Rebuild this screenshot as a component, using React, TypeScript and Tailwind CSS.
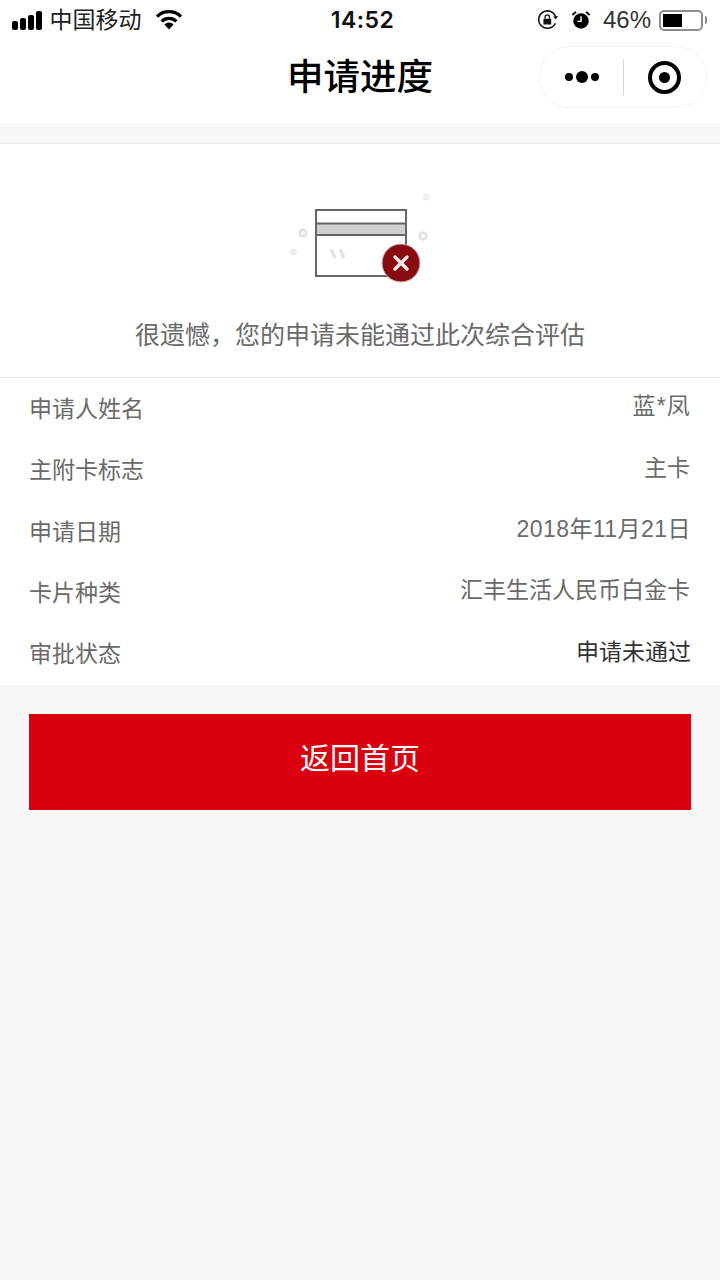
const font = { fontFamily: '"Liberation Sans", "Noto Sans CJK SC", sans-serif' };

const rows = [
  { label: "申请人姓名", value: "蓝*凤", spacing: "tracking-[1.2px] mr-[-1px]", tone: "text-[#6a6a6a]" },
  { label: "主附卡标志", value: "主卡", spacing: "", tone: "text-[#6a6a6a]" },
  { label: "申请日期", value: "2018年11月21日", spacing: "tracking-[0.45px] mr-[-1px]", tone: "text-[#6a6a6a]" },
  { label: "卡片种类", value: "汇丰生活人民币白金卡", spacing: "", tone: "text-[#6a6a6a]" },
  { label: "审批状态", value: "申请未通过", spacing: "mr-[-1px]", tone: "text-[#333]" },
];

function StatusBar() {
  return (
    <div className="flex h-[40px] items-center justify-between pl-[12px] pr-[13px] text-black">
      <div className="flex w-[200px] items-center">
        <div className="flex items-end gap-[2.5px]">
          <span className="h-[9px] w-[5.5px] rounded-[2px] bg-black" />
          <span className="h-[12px] w-[5.5px] rounded-[2px] bg-black" />
          <span className="h-[15px] w-[5.5px] rounded-[2px] bg-black" />
          <span className="h-[19px] w-[5.5px] rounded-[2px] bg-black" />
        </div>
        <span className="ml-[8px] text-[23px] leading-[30px] text-[#222]">中国移动</span>
        <svg className="ml-[13px]" width="28" height="20" viewBox="0 0 28 20">
          <path d="M14 19.5l-4.6-5a6.4 6.4 0 0 1 9.2 0z" fill="#000" />
          <path d="M6.6 11.4a10.6 10.6 0 0 1 14.8 0" fill="none" stroke="#000" strokeWidth="3.2" />
          <path d="M2 6.6a17.2 17.2 0 0 1 24 0" fill="none" stroke="#000" strokeWidth="3.2" />
        </svg>
      </div>
      <span className="ml-[6px] text-[23px] tracking-[0.5px] text-[#111]" style={{ fontFamily: '"Inter", sans-serif', fontWeight: 600 }}>14:52</span>
      <div className="flex w-[200px] items-center justify-end">
        <svg width="22" height="22" viewBox="0 0 24 22">
          <path d="M20 14.5A9.5 9.5 0 1 1 20.5 8" fill="none" stroke="#111" strokeWidth="1.7" />
          <path d="M17.5 7.5l3.2 2.6 2.3-3.4z" fill="#111" />
          <rect x="7" y="9.5" width="8.5" height="6.5" rx="1" fill="#111" />
          <path d="M8.8 9.5V7.8a2.4 2.4 0 0 1 4.8 0v1.7" fill="none" stroke="#111" strokeWidth="1.4" />
        </svg>
        <svg className="ml-[12px]" width="20" height="20" viewBox="0 0 22 22">
          <circle cx="11" cy="12" r="8.5" fill="#000" />
          <path d="M11 7v5.5H7" fill="none" stroke="#fff" strokeWidth="1.6" />
          <path d="M1.5 5.5L5.5 2M20.5 5.5L16.5 2" stroke="#000" strokeWidth="2" />
        </svg>
        <span className="ml-[12px] text-[24px] leading-[30px] text-[#333]">46%</span>
        <div className="ml-[8px] flex h-[21px] w-[44px] items-center rounded-[5px] border-2 border-[#8d8d8d] p-[2px]">
          <div className="h-full w-[19px] bg-black" />
        </div>
        <span className="ml-[2px] h-[8px] w-[2px] rounded-r-[2px] bg-[#8d8d8d]" />
      </div>
    </div>
  );
}

function NavBar() {
  return (
    <div className="relative flex h-[83px] items-center justify-center bg-white">
      <h1 className="mb-[8px] text-[36.5px] font-medium leading-[44px] text-black">申请进度</h1>
      <div className="absolute left-[539px] top-[6px] flex h-[62px] w-[168px] items-center rounded-full border border-[#f2f2f2] bg-white">
        <div className="flex w-[83px] items-center justify-center gap-[3px] pl-[1px]">
          <span className="size-[8px] rounded-full bg-black" />
          <span className="size-[12px] rounded-full bg-black" />
          <span className="size-[8px] rounded-full bg-black" />
        </div>
        <span className="h-[36px] w-px bg-[#d8d8d8]" />
        <div className="flex flex-1 items-center justify-center pr-[2px]">
          <div className="flex size-[33px] items-center justify-center rounded-full border-[4px] border-black">
            <span className="size-[11px] rounded-full bg-black" />
          </div>
        </div>
      </div>
    </div>
  );
}

function CardFail() {
  return (
    <svg width="150" height="112" viewBox="0 0 150 112" style={{ filter: "blur(0.6px)" }}>
      <circle cx="136" cy="17" r="3.5" fill="#efefef" />
      <circle cx="13" cy="53" r="3.5" fill="#f8f8f8" stroke="#e0e0e0" strokeWidth="2.4" />
      <circle cx="133" cy="56" r="3.5" fill="#f8f8f8" stroke="#e0e0e0" strokeWidth="2.4" />
      <circle cx="3.5" cy="72" r="3.5" fill="#ececec" />
      <rect x="26" y="30" width="90" height="66" fill="#fff" stroke="#666" strokeWidth="2" />
      <rect x="27" y="44" width="88" height="11" fill="#cfcfcf" />
      <path d="M26 43.5h90M26 55h90" stroke="#666" strokeWidth="2" />
      <path d="M41 69l4 9M50 69l4 9" stroke="#e4e4e4" strokeWidth="3.5" />
      <circle cx="111" cy="83" r="19" fill="#8a0a12" stroke="#bdbdbd" strokeWidth="1" />
      <path d="M105 77l12 12M117 77l-12 12" stroke="#f6e6e6" strokeWidth="3.4" strokeLinecap="round" />
    </svg>
  );
}

export default function App() {
  return (
    <div className="flex min-h-[1280px] flex-col bg-[#f7f7f7]" style={font}>
      <div className="bg-white">
        <StatusBar />
        <NavBar />
      </div>
      <div className="mt-[20px] border-y border-[#e8e8e8] bg-white">
        <div className="flex h-[233px] flex-col items-center">
          <div className="mt-[36px] ml-[10px]">
            <CardFail />
          </div>
          <p className="mt-[26px] text-[25px] leading-[34px] text-[#6a6a6a]">很遗憾，您的申请未能通过此次综合评估</p>
        </div>
      </div>
      <div className="flex h-[307px] flex-col bg-white pl-[29px] pr-[30px]">
        {rows.map((row) => (
          <div key={row.label} className="flex h-[61.5px] items-center justify-between">
            <span className="text-[23px] leading-[30px] text-[#6a6a6a]">{row.label}</span>
            <span className={`mb-[5px] text-[23px] leading-[30px] ${row.spacing} ${row.tone}`}>{row.value}</span>
          </div>
        ))}
      </div>
      <button className="mx-[29px] mt-[29px] flex h-[96px] items-center justify-center bg-[#db000f] pb-[7px] text-[30px] text-white">
        返回首页
      </button>
    </div>
  );
}
